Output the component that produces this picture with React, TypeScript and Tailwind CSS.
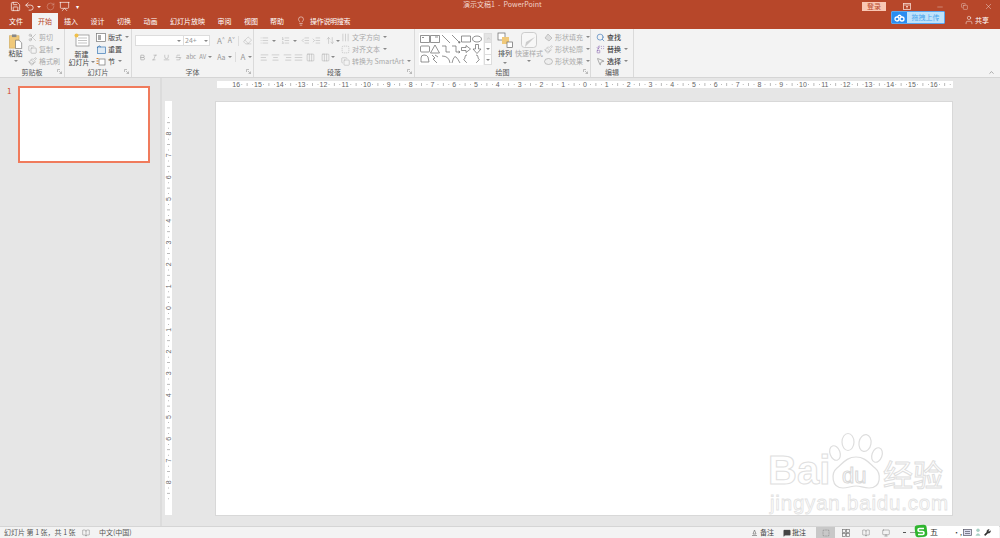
import React from 'react';
import {
  Save, Undo2, RotateCw, Presentation, Lightbulb, Minus, X, Copy, Scissors, Paintbrush, ChevronUp,
  Search, MousePointer2, Replace, User, Bold, Italic, Underline, Strikethrough, List, ListOrdered,
  IndentDecrease, IndentIncrease, AlignLeft, AlignCenter, AlignRight, AlignJustify, Columns3,
  MessageSquare, BookOpen, ArrowUpDown, Monitor, SquareDashed, Eraser, Wrench,
} from 'lucide-react';

const tabs = [
  { name: '插入', w: 'w-[26px]' },
  { name: '设计', w: 'w-[27px]' },
  { name: '切换', w: 'w-[26px]' },
  { name: '动画', w: 'w-[27px]' },
  { name: '幻灯片放映', w: 'w-[47px]' },
  { name: '审阅', w: 'w-[27px]' },
  { name: '视图', w: 'w-[26px]' },
  { name: '帮助', w: 'w-[26px]' },
];

function Caret({ className = '' }: { className?: string }) {
  return <span className={`inline-block w-0 h-0 border-l-[2px] border-r-[2px] border-t-[2px] border-l-transparent border-r-transparent border-t-[#888] ${className}`} />;
}

function Group({ label, w, children }: { label: string; w: string; children: React.ReactNode }) {
  return (
    <div className={`${w} shrink-0 h-full border-r border-[#dadada] flex flex-col relative`}>
      <div className="h-[39px] flex">{children}</div>
      <div className="h-[9px] flex items-center justify-center text-[7px] leading-none text-[#555]">{label}</div>
      {label !== '编辑' && (
        <svg className="absolute right-[2px] bottom-[3px]" width="5" height="5" viewBox="0 0 5 5">
          <path d="M0.5 0.5H3M0.5 0.5V3M2 2L4.5 4.5M4.5 2.5V4.5H2.5" stroke="#999" strokeWidth="0.6" fill="none" />
        </svg>
      )}
    </div>
  );
}

function SmallBtn({ icon, text, caret, muted }: { icon: React.ReactNode; text: string; caret?: boolean; muted?: boolean }) {
  return (
    <div className={`h-[12px] flex items-center gap-[2px] text-[7px] leading-none whitespace-nowrap ${muted ? 'text-[#aaa]' : 'text-[#444]'}`}>
      <span className="w-[10px] h-[10px] flex items-center justify-center shrink-0">{icon}</span>
      <span>{text}</span>
      {caret && <Caret className="ml-[1px]" />}
    </div>
  );
}

function Shape({ d }: { d: string }) {
  return (
    <svg width="10" height="10" viewBox="0 0 10 10" className="shrink-0">
      <path d={d} stroke="#666" strokeWidth="0.7" fill="none" />
    </svg>
  );
}

const shapes = [
  'M.5 1.5h9v7h-9zM2 3.5h2', 'M.5 1.5h9v7h-9zM5 3h3', 'M1 1L9 9', 'M1 1L9 9M9 9L7 8.5M9 9L8.5 7', 'M.5 2h9v6h-9z', 'M5 2C8 2 9.5 3.5 9.5 5S8 8 5 8 .5 6.500 .5 5 2 2 5 2z',
  'M1.500 2h7q1 0 1 1v4q0 1-1 1h-7q-1 0-1-1V3q0-1 1-1z', 'M5 1L9.500 9H.5z', 'M1 2H5V8H9', 'M1 2H5V8H9M9 8L7.500 7M9 8L7.500 9', 'M.5 3.500H5V1.500L9.500 5 5 8.500V6.500H.5z', 'M3.500 .5H6.500V5H9L5 9.500 1 5H3.500z',
  'M1 8V4Q1 1 4 1T8 3L9 8z', 'M2 1L5 4 3 5 7 9M5 1L8 3', 'M1 2Q8 2 9 9', 'M1 9Q3 1 5 3T9 9', 'M6 1Q4 1 4 3T3 5 4 7 6 9', 'M4 1Q6 1 6 3T7 5 6 7 4 9',
];

function HRuler() {
  const nums = Array.from({ length: 33 }, (_, i) => i - 16);
  return (
    <svg width="736" height="7" viewBox="0 0 736 7" className="block bg-white">
      {nums.map((n) => {
        const x = 368 + n * 21.8;
        return (
          <g key={n}>
            <text x={x} y="5.800" textAnchor="middle" fontSize="7" fill="#666" fontFamily="Liberation Sans, sans-serif">{Math.abs(n)}</text>
            <rect x={x + 5.200} y="3" width="0.800" height="1" fill="#aaa" />
            <rect x={x + 10.500} y="2" width="0.800" height="3" fill="#aaa" />
            <rect x={x + 16} y="3" width="0.800" height="1" fill="#aaa" />
          </g>
        );
      })}
    </svg>
  );
}

function VRuler() {
  const nums = Array.from({ length: 19 }, (_, i) => i - 9);
  return (
    <svg width="7" height="414" viewBox="0 0 7 414" className="block bg-white">
      {nums.map((n) => {
        const y = 207 + n * 21.8;
        return (
          <g key={n}>
            {n !== -9 && n !== 9 && (
              <text x="3.500" y={y + 2.400} textAnchor="middle" fontSize="7" fill="#666" fontFamily="Liberation Sans, sans-serif" transform={`rotate(-90 3.500 ${y})`}>{Math.abs(n)}</text>
            )}
            {n !== 9 && (
              <>
                <rect x="3" y={y + 5.200} width="1" height="0.800" fill="#aaa" />
                <rect x="2" y={y + 10.500} width="3" height="0.800" fill="#aaa" />
                <rect x="3" y={y + 16} width="1" height="0.800" fill="#aaa" />
              </>
            )}
          </g>
        );
      })}
    </svg>
  );
}

function Watermark() {
  return (
    <div className="absolute right-[5px] bottom-0 w-[179px] h-[86px] pointer-events-none">
      <svg className="absolute left-[58px] top-[3px]" width="60" height="60" viewBox="0 0 60 60" fill="#fff" stroke="#dedede" strokeWidth="1.200">
        <ellipse cx="9" cy="21" rx="5" ry="7.500" transform="rotate(-20 9 21)" />
        <ellipse cx="22" cy="10" rx="6" ry="8.500" />
        <ellipse cx="39" cy="11" rx="6" ry="8.500" transform="rotate(10 39 11)" />
        <ellipse cx="51" cy="23" rx="5" ry="7.500" transform="rotate(20 51 23)" />
        <path d="M30 25C39 25 43 31 49 36 55 41 56 56 43 56 37 56 35 54 30 54 25 54 22 56 17 56 5 56 5 41 11 36 17 31 21 25 30 25Z" />
      </svg>
      <div className="absolute left-0 top-[21px] text-[40px] leading-none font-['Liberation_Sans',sans-serif] font-bold text-white [-webkit-text-stroke:1px_#e0e0e0]">Bai</div>
      <div className="absolute left-[74px] top-[36px] text-[22px] leading-none font-['Liberation_Sans',sans-serif] text-white [-webkit-text-stroke:1px_#d8d8d8]">du</div>
      <div className="absolute left-[115px] top-[29px] text-[30px] leading-none text-white [-webkit-text-stroke:1px_#dedede] whitespace-nowrap">经验</div>
      <div className="absolute left-[2px] top-[64px] text-[20.5px] leading-none font-['Liberation_Sans',sans-serif] text-white [-webkit-text-stroke:0.8px_#e2e2e2] tracking-[0.8px] whitespace-nowrap">jingyan.baidu.com</div>
    </div>
  );
}

export default function App() {
  const sz = { size: 9, strokeWidth: 1.3 };
  return (
    <div className="w-[1000px] h-[538px] overflow-hidden flex flex-col bg-[#e6e6e6] font-['Noto_Sans_CJK_SC','Liberation_Sans',sans-serif] text-[#444] relative">
      {/* title bar */}
      <header className="h-[29px] shrink-0 bg-[#b7472a] text-white flex flex-col">
        <div className="h-[13px] flex items-center relative">
          <div className="flex items-center pl-[10px] w-[300px] text-white">
            <Save size={11} strokeWidth={1.5} />
            <Undo2 size={11} strokeWidth={1.5} className="ml-[3px]" />
            <Caret className="ml-[2px] border-t-white" />
            <RotateCw size={9} strokeWidth={1.3} className="ml-[5px] opacity-50" />
            <Presentation size={11} strokeWidth={1.4} className="ml-[4px]" />
            <span className="ml-[6px] text-[6px] leading-none">▾</span>
          </div>
          <div className="absolute left-[463px] top-0 h-[9px] flex items-center text-[7px] leading-none text-[#f2d4ca] whitespace-nowrap">演示文稿1&nbsp;&nbsp;-&nbsp;&nbsp;PowerPoint</div>
          <div className="ml-auto flex items-center h-full self-start">
            <div className="w-[24px] h-[9px] bg-[#f9c7b4] text-[#b7472a] text-[7px] leading-none flex items-center justify-center">登录</div>
            <div className="w-[42px] h-[9px] flex items-center justify-center">
              <svg width="8" height="7" viewBox="0 0 8 7" fill="none" stroke="#f6d9cf" strokeWidth=".8"><rect x=".5" y=".5" width="7" height="6" /><path d="M.5 2h7M4 5.500V3M3 4l1-1 1 1" /></svg>
            </div>
            <div className="w-[24px] h-[9px] flex items-center justify-center"><Minus size={8} strokeWidth={1} /></div>
            <div className="w-[24px] h-[9px] flex items-center justify-center"><Copy size={7} strokeWidth={1.2} /></div>
            <div className="w-[24px] h-[9px] flex items-center justify-center"><X size={9} strokeWidth={1} /></div>
          </div>
        </div>
        <div className="h-[16px] flex items-end text-[7px] leading-none">
          <div className="w-[32px] h-full flex items-center justify-center">文件</div>
          <div className="w-[26px] h-full bg-[#f3f3f3] text-[#b7472a] flex items-center justify-center">开始</div>
          {tabs.map((t) => (
            <div key={t.name} className={`${t.w} h-full flex items-center justify-center`}>{t.name}</div>
          ))}
          <div className="h-full flex items-center ml-[6px]">
            <Lightbulb size={10} strokeWidth={1.2} />
            <span className="ml-[4px] tracking-[-0.3px]">操作说明搜索</span>
          </div>
          <div className="ml-auto h-full flex items-start relative">
            <div className="w-[54px] h-[13px] mt-[-2px] mr-[55px] flex rounded-[1px] overflow-hidden border border-[#5aa7ef]">
              <div className="w-[15px] bg-[#2a8df0] flex items-center justify-center">
                <svg width="11" height="8" viewBox="0 0 11 8" fill="none" stroke="#fff" strokeWidth="1.300">
                  <circle cx="3" cy="5" r="2" /><circle cx="8" cy="5" r="2" /><path d="M3.500 3Q5.500 -.5 7.500 3" />
                </svg>
              </div>
              <div className="flex-1 bg-[#bfe3fb] text-[#4aa5ec] flex items-center justify-center text-[7px]">拖拽上传</div>
            </div>
            <div className="absolute right-[11px] top-[2px] flex items-center gap-[1px] whitespace-nowrap">
              <User size={10} strokeWidth={1.2} /><span>共享</span>
            </div>
          </div>
        </div>
      </header>

      {/* ribbon */}
      <section className="h-[49px] shrink-0 bg-[#f3f3f3] border-b border-[#d5d5d5] flex relative">
        <Group label="剪贴板" w="w-[65px]">
          <div className="w-[26px] pl-[5px] flex flex-col items-center text-[7px] leading-none pt-[5px]">
            <svg width="15" height="15" viewBox="0 0 16 17">
              <rect x="1" y="2" width="11" height="14" fill="#f0c97a" stroke="#c9a45a" strokeWidth="0.6" />
              <rect x="4" y="0.500" width="5" height="3" fill="#888" />
              <path d="M8 7h4l3 3v6.500H8z" fill="#fff" stroke="#666" strokeWidth="0.7" />
            </svg>
            <span className="mt-[1px]">粘贴</span>
            <Caret className="mt-[3px]" />
          </div>
          <div className="flex flex-col pt-[2px] pl-[1px]">
            <SmallBtn muted icon={<Scissors {...sz} className="text-[#999]" />} text="剪切" />
            <SmallBtn muted caret icon={<Copy {...sz} className="text-[#999]" />} text="复制" />
            <SmallBtn muted icon={<Paintbrush {...sz} className="text-[#999]" />} text="格式刷" />
          </div>
        </Group>

        <Group label="幻灯片" w="w-[67px]">
          <div className="w-[31px] pl-[2px] flex flex-col items-center text-[7px] leading-[8px] pt-[4px]">
            <svg width="16" height="14" viewBox="0 0 16 14">
              <rect x="2" y="2" width="13" height="11" fill="#fff" stroke="#888" strokeWidth="0.7" />
              <path d="M4 5h9M4 7.500h9M4 10h9" stroke="#aaa" strokeWidth="0.7" />
              <circle cx="2.500" cy="2.500" r="2" fill="#f0c04a" />
            </svg>
            <span className="mt-[3px]">新建</span>
            <span className="flex items-center gap-[1px] whitespace-nowrap">幻灯片<Caret /></span>
          </div>
          <div className="flex flex-col pt-[2px]">
            <SmallBtn caret icon={<svg width="10" height="9" viewBox="0 0 10 9"><rect x=".5" y=".5" width="9" height="8" fill="#fff" stroke="#777" strokeWidth=".7" /><rect x="2" y="2" width="3" height="5" fill="#aaa" /></svg>} text="版式" />
            <SmallBtn icon={<svg width="10" height="9" viewBox="0 0 10 9"><rect x="1.500" y="2" width="8" height="6.500" fill="#dfeaf4" stroke="#3d79b5" strokeWidth=".7" /><path d="M1 3L3 .8 5 2" stroke="#3d79b5" fill="none" strokeWidth=".8" /></svg>} text="重置" />
            <SmallBtn caret icon={<svg width="10" height="9" viewBox="0 0 10 9"><rect x="3" y="2" width="6" height="6" fill="#fff" stroke="#777" strokeWidth=".7" /><path d="M.5 1.500h2M.5 4h2M.5 6.500h2" stroke="#d9822b" strokeWidth="1" /></svg>} text="节" />
          </div>
        </Group>

        <Group label="字体" w="w-[122px]">
          <div className="flex flex-col pl-[3px] pt-[6px] w-full">
            <div className="flex items-center">
              <div className="w-[49px] h-[11px] bg-white border border-[#ddd] flex items-center justify-end pr-[2px]"><Caret /></div>
              <div className="w-[26px] h-[11px] bg-white border border-l-0 border-[#ddd] flex items-center justify-between px-[1px] text-[7px] text-[#999] leading-none">24+<Caret /></div>
              <span className="ml-[7px] text-[8px] text-[#999] leading-none">A<sup className="text-[5px]">^</sup></span>
              <span className="ml-[3px] text-[7px] text-[#999] leading-none">A<sup className="text-[5px]">ˇ</sup></span>
              <span className="ml-[3px] w-px h-[10px] bg-[#ddd]" />
              <Eraser size={9} strokeWidth={1.2} className="ml-[4px] text-[#aaa]" />
            </div>
            <div className="flex items-center mt-[5px] pl-[4px] text-[#999] h-[12px]">
              <Bold size={7} strokeWidth={2} />
              <Italic size={7} strokeWidth={1.6} className="ml-[5px]" />
              <Underline size={7} strokeWidth={1.6} className="ml-[5px]" />
              <Strikethrough size={7} strokeWidth={1.6} className="ml-[5px]" />
              <span className="ml-[4px] text-[6px] leading-none">abc</span>
              <span className="ml-[3px] text-[6px] leading-none">AV</span><Caret className="ml-[2px]" />
              <span className="ml-[5px] text-[7px] leading-none">Aa</span><Caret className="ml-[2px]" />
              <span className="ml-[3px] w-px h-[10px] bg-[#ddd]" />
              <span className="ml-[5px] text-[8px] leading-none">A</span><Caret className="ml-[3px]" />
            </div>
          </div>
        </Group>

        <Group label="段落" w="w-[161px]">
          <div className="flex flex-col pl-[6px] pt-[6px] w-[86px] text-[#aaa]">
            <div className="h-[11px] flex items-center">
              <List {...sz} /><Caret className="ml-[3px]" />
              <ListOrdered {...sz} className="ml-[5px]" /><Caret className="ml-[3px]" />
              <IndentDecrease {...sz} className="ml-[4px]" />
              <IndentIncrease {...sz} className="ml-[3px]" />
              <ArrowUpDown {...sz} className="ml-[5px]" /><Caret className="ml-[1px]" />
            </div>
            <div className="h-[12px] mt-[5px] flex items-center">
              <AlignLeft {...sz} />
              <AlignCenter {...sz} className="ml-[2px]" />
              <AlignRight {...sz} className="ml-[3px]" />
              <AlignJustify {...sz} className="ml-[2px]" />
              <Columns3 {...sz} className="ml-[3px]" />
              <Columns3 {...sz} className="ml-[6px]" /><Caret className="ml-[1px]" />
            </div>
          </div>
          <div className="flex flex-col pt-[2px]">
            <SmallBtn muted caret icon={<AlignJustify {...sz} className="rotate-90" />} text="文字方向" />
            <SmallBtn muted caret icon={<SquareDashed {...sz} />} text="对齐文本" />
            <SmallBtn muted caret icon={<Copy {...sz} />} text="转换为 SmartArt" />
          </div>
        </Group>

        <Group label="绘图" w="w-[176px]">
          <div className="ml-[4px] mt-[4px] h-[32px] flex">
            <div className="w-[64px] h-[32px] bg-white px-[1px] py-[1px] grid grid-cols-6 grid-rows-3 place-items-center">
              {shapes.map((d) => <Shape key={d} d={d} />)}
            </div>
            <div className="w-[8px] flex flex-col ml-[1px]">
              <div className="h-[10px] bg-[#e4e4e4] border border-[#ddd] flex items-center justify-center text-[#aaa]"><ChevronUp size={5} /></div>
              <div className="h-[11px] bg-white border-x border-[#ddd] flex items-center justify-center"><Caret /></div>
              <div className="h-[11px] bg-white border border-[#ddd] flex items-center justify-center"><Caret /></div>
            </div>
          </div>
          <div className="w-[26px] ml-[3px] pt-[3px] flex flex-col items-center text-[7px] leading-none">
            <svg width="16" height="16" viewBox="0 0 16 16">
              <rect x="1" y="1" width="7" height="7" fill="#fff" stroke="#666" strokeWidth=".7" />
              <rect x="5" y="5" width="7" height="7" fill="#f0c97a" />
              <rect x="10" y="10" width="5.500" height="5.500" fill="#fff" stroke="#666" strokeWidth=".7" />
            </svg>
            <span className="mt-[2px]">排列</span>
            <Caret className="mt-[5px]" />
          </div>
          <div className="w-[30px] pt-[3px] flex flex-col items-center text-[7px] leading-none text-[#aaa] whitespace-nowrap">
            <svg width="16" height="17" viewBox="0 0 16 17">
              <rect x=".5" y=".5" width="15" height="15" rx="3" fill="#f7f7f7" stroke="#bbb" strokeWidth=".7" />
              <path d="M14 5L7 12 4 15 5 10z" fill="#ccc" />
            </svg>
            <span className="mt-[1px]">快速样式</span>
            <Caret className="mt-[3px]" />
          </div>
          <div className="flex flex-col pt-[2px]">
            <SmallBtn muted caret icon={<svg width="9" height="9" viewBox="0 0 9 9"><path d="M4 1L8 5 5 8 1 5z" fill="#ddd" stroke="#aaa" strokeWidth=".6" /></svg>} text="形状填充" />
            <SmallBtn muted caret icon={<Paintbrush {...sz} />} text="形状轮廓" />
            <SmallBtn muted caret icon={<svg width="9" height="9" viewBox="0 0 9 9"><ellipse cx="4.500" cy="4.500" rx="4" ry="3" fill="#eee" stroke="#aaa" strokeWidth=".7" /></svg>} text="形状效果" />
          </div>
        </Group>

        <Group label="编辑" w="w-[43px]">
          <div className="flex flex-col pt-[2px] pl-[4px] font-medium">
            <SmallBtn icon={<Search size={9} strokeWidth={1.6} className="text-[#2f6fb5]" />} text="查找" />
            <SmallBtn caret icon={<Replace size={9} strokeWidth={1.4} className="text-[#7b55a8]" />} text="替换" />
            <SmallBtn caret icon={<MousePointer2 size={9} strokeWidth={1.2} className="text-[#555]" />} text="选择" />
          </div>
        </Group>

        <ChevronUp size={7} strokeWidth={1.8} className="absolute right-[5px] bottom-[1px] text-[#666]" />
      </section>

      {/* workspace */}
      <main className="flex-1 min-h-0 flex">
        <aside className="w-[162px] shrink-0 border-r-2 border-[#dcdcdc] flex items-start pt-[8px]">
          <span className="w-[18px] pl-[7px] text-[8px] leading-[10px] text-[#d24726]">1</span>
          <div className="w-[132px] h-[77px] bg-white border-2 border-[#f07b5c]" />
        </aside>
        <div className="flex-1 min-w-0 flex flex-col pl-[3px] pt-[3px]">
          <div className="h-[7px] pl-[52px] shrink-0"><HRuler /></div>
          <div className="flex mt-[13px]">
            <div className="w-[7px] shrink-0"><VRuler /></div>
            <div className="ml-[43px] w-[738px] h-[415px] bg-white border border-[#d8d8d8] relative">
              <Watermark />
            </div>
          </div>
        </div>
      </main>

      {/* status bar */}
      <footer className="h-[11px] shrink-0 bg-[#f3f3f3] border-t border-[#d5d5d5] flex items-center text-[7px] leading-none text-[#555] pl-[4px] relative box-content">
        <span className="w-[78px] whitespace-nowrap">幻灯片 第 1 张，共 1 张</span>
        <BookOpen size={8} strokeWidth={1.1} />
        <span className="ml-[9px]">中文(中国)</span>
        <div className="ml-auto flex items-center h-full">
          <span className="flex items-center gap-[2px] font-medium"><svg width="7" height="7" viewBox="0 0 7 7"><path d="M1 6.500h5M2 5l1.500-4L5 5z" stroke="#777" fill="none" strokeWidth=".7" /></svg>备注</span>
          <span className="ml-[9px] flex items-center gap-[1px] font-medium"><MessageSquare size={8} fill="#444" strokeWidth={1} />批注</span>
          <div className="ml-[10px] w-[19px] h-full bg-[#c8c8c8] flex items-center justify-center"><SquareDashed size={8} strokeWidth={1.1} /></div>
          <div className="w-[21px] flex justify-center">
            <svg width="8" height="8" viewBox="0 0 8 8" fill="none" stroke="#777" strokeWidth=".7"><rect x=".5" y=".5" width="3" height="3" /><rect x="4.500" y=".5" width="3" height="3" /><rect x=".5" y="4.500" width="3" height="3" /><rect x="4.500" y="4.500" width="3" height="3" /></svg>
          </div>
          <div className="w-[19px] flex justify-center"><BookOpen size={8} strokeWidth={1.1} /></div>
          <div className="w-[21px] flex justify-center"><Monitor size={8} strokeWidth={1.1} /></div>
          <div className="w-[104px] flex items-center pl-[7px]"><span className="w-[3px] h-px bg-[#555]" /><span className="ml-[4px] w-[15px] h-px bg-[#999]" /></div>
        </div>
        {/* input method bar */}
        <div className="absolute right-[1px] bottom-0 h-[12px] w-[75px] bg-white flex items-center text-[#333]">
          <svg className="absolute left-[-10px] bottom-[0px]" width="15" height="14" viewBox="0 0 15 14">
            <rect x="1" y="1" width="12" height="12" rx="3" fill="#2fb52f" transform="rotate(-6 7 7)" />
            <path d="M10 4.500H5.500Q4 4.500 4 6T5.500 7.500H8.500Q10 7.500 10 9T8.500 10.500H4" stroke="#fff" strokeWidth="1.600" fill="none" />
          </svg>
          <span className="ml-[6px] text-[8px] leading-none w-[9px]">五</span>
          <svg className="ml-[3px] shrink-0" width="8" height="8" viewBox="0 0 8 8"><path d="M6 .8A3.600 3.600 0 1 1 .8 6 3 3 0 0 0 6 .8z" fill="#333" /></svg>
          <span className="ml-[3px] w-[6px] text-[7px] leading-none">•,</span>
          <svg className="ml-[4px] shrink-0" width="9" height="7" viewBox="0 0 9 7"><rect x=".5" y=".5" width="8" height="6" fill="#dde" stroke="#556" strokeWidth=".7" /><path d="M2 2.500h5M2 4.500h5" stroke="#556" strokeWidth=".7" /></svg>
          <svg className="ml-[3px] shrink-0" width="6" height="8" viewBox="0 0 7 9"><circle cx="3.500" cy="2.500" r="2" fill="#a8d0c4" /><path d="M.5 9Q3.500 3 6.500 9z" fill="#a8d0c4" /></svg>
          <Wrench size={7} strokeWidth={2} fill="#333" className="ml-[3px] shrink-0" />
        </div>
      </footer>
    </div>
  );
}
